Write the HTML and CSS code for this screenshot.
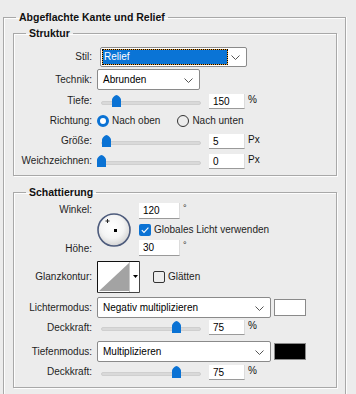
FILE: index.html
```html
<!DOCTYPE html>
<html lang="de">
<head>
<meta charset="utf-8">
<link rel="stylesheet" href="styles.css">
</head>
<body>
<fieldset class="box outer">
  <legend>Abgeflachte Kante und Relief</legend>

  <fieldset class="box inner struktur">
    <legend>Struktur</legend>

    <div class="row h21">
      <span class="lbl">Stil:</span>
      <div class="select sel-stil">
        <span class="hl">Relief</span>
        <svg class="chev" width="9" height="5" viewBox="0 0 9 5"><polyline points="0.5,0.5 4.5,4.5 8.5,0.5" fill="none" stroke="#555" stroke-width="1"/></svg>
      </div>
    </div>

    <div class="row h25">
      <span class="lbl">Technik:</span>
      <div class="select sel-tech">
        <span class="val">Abrunden</span>
        <svg class="chev" width="9" height="5" viewBox="0 0 9 5"><polyline points="0.5,0.5 4.5,4.5 8.5,0.5" fill="none" stroke="#555" stroke-width="1"/></svg>
      </div>
    </div>

    <div class="row h18">
      <span class="lbl">Tiefe:</span>
      <div class="slider"><span class="track"></span>
        <svg class="thumb" style="left:15px" width="9" height="12" viewBox="0 0 9 12"><path d="M4.5 0 C6 0 9 3 9 4.5 V12 H0 V4.5 C0 3 3 0 4.5 0 Z" fill="#0a72d4"/></svg>
      </div>
      <span class="field">150</span><span class="unit">%</span>
    </div>

    <div class="row h21">
      <span class="lbl">Richtung:</span>
      <span class="radio on"></span><span class="rtext">Nach oben</span>
      <span class="radio off"></span><span class="rtext">Nach unten</span>
    </div>

    <div class="row h20">
      <span class="lbl">Größe:</span>
      <div class="slider"><span class="track"></span>
        <svg class="thumb" style="left:5px" width="9" height="12" viewBox="0 0 9 12"><path d="M4.5 0 C6 0 9 3 9 4.5 V12 H0 V4.5 C0 3 3 0 4.5 0 Z" fill="#0a72d4"/></svg>
      </div>
      <span class="field">5</span><span class="unit">Px</span>
    </div>

    <div class="row h20">
      <span class="lbl">Weichzeichnen:</span>
      <div class="slider"><span class="track"></span>
        <svg class="thumb" style="left:0px" width="9" height="12" viewBox="0 0 9 12"><path d="M4.5 0 C6 0 9 3 9 4.5 V12 H0 V4.5 C0 3 3 0 4.5 0 Z" fill="#0a72d4"/></svg>
      </div>
      <span class="field">0</span><span class="unit">Px</span>
    </div>
  </fieldset>

  <fieldset class="box inner schatt">
    <legend>Schattierung</legend>

    <div class="angle-block">
      <div class="lblcol">
        <span class="lbl">Winkel:</span>
        <span class="lbl">Höhe:</span>
      </div>
      <div class="dial">
        <svg width="34" height="34" viewBox="0 0 34 34">
          <defs>
            <radialGradient id="dg" cx="45%" cy="40%" r="60%">
              <stop offset="0" stop-color="#ffffff"/>
              <stop offset="0.6" stop-color="#f4f4f4"/>
              <stop offset="1" stop-color="#d4d4d4"/>
            </radialGradient>
          </defs>
          <circle cx="17" cy="17" r="16" fill="url(#dg)" stroke="#4d5b7c" stroke-width="1.6"/>
          <path d="M10.5 6 V10 M8.5 8 H12.5" stroke="#222" stroke-width="1"/>
          <rect x="17" y="16" width="3" height="3" fill="#000"/>
        </svg>
      </div>
      <div class="anglecol">
        <div class="arow"><span class="field f41">120</span><span class="deg">°</span></div>
        <div class="arow"><span class="check on"><svg width="12" height="12" viewBox="0 0 12 12"><polyline points="2.8,6.2 5,8.4 9.4,3.6" fill="none" stroke="#fff" stroke-width="1.1"/></svg></span><span class="ctext">Globales Licht verwenden</span></div>
        <div class="arow"><span class="field f41">30</span><span class="deg">°</span></div>
      </div>
    </div>

    <div class="row glanz">
      <span class="lbl">Glanzkontur:</span>
      <div class="contour">
        <svg width="43" height="32" viewBox="0 0 43 32">
          <rect x="0" y="0" width="43" height="32" fill="#fff"/>
          <polygon points="2,30 32,2 32,30" fill="#a3a3a3"/>
          <line x1="32.5" y1="1" x2="32.5" y2="31" stroke="#c8c8c8"/>
          <polygon points="36,14 41,14 38.5,17" fill="#000"/>
          <path d="M0.5 31.5 V0.5 H42.5" fill="none" stroke="#111"/>
          <path d="M42.5 0.5 V31.5 H0.5" fill="none" stroke="#444"/>
        </svg>
      </div>
      <span class="check off"></span><span class="ctext">Glätten</span>
    </div>

    <div class="row h21 mt5">
      <span class="lbl">Lichtermodus:</span>
      <div class="select sel-mode">
        <span class="val">Negativ multiplizieren</span>
        <svg class="chev" width="9" height="5" viewBox="0 0 9 5"><polyline points="0.5,0.5 4.5,4.5 8.5,0.5" fill="none" stroke="#555" stroke-width="1"/></svg>
      </div>
      <span class="swatch white"></span>
    </div>

    <div class="row h19">
      <span class="lbl">Deckkraft:</span>
      <div class="slider"><span class="track"></span>
        <svg class="thumb" style="left:75px" width="9" height="12" viewBox="0 0 9 12"><path d="M4.5 0 C6 0 9 3 9 4.5 V12 H0 V4.5 C0 3 3 0 4.5 0 Z" fill="#0a72d4"/></svg>
      </div>
      <span class="field">75</span><span class="unit">%</span>
    </div>

    <div class="row h21 mt4">
      <span class="lbl">Tiefenmodus:</span>
      <div class="select sel-mode">
        <span class="val">Multiplizieren</span>
        <svg class="chev" width="9" height="5" viewBox="0 0 9 5"><polyline points="0.5,0.5 4.5,4.5 8.5,0.5" fill="none" stroke="#555" stroke-width="1"/></svg>
      </div>
      <span class="swatch black"></span>
    </div>

    <div class="row h20">
      <span class="lbl">Deckkraft:</span>
      <div class="slider"><span class="track"></span>
        <svg class="thumb" style="left:75px" width="9" height="12" viewBox="0 0 9 12"><path d="M4.5 0 C6 0 9 3 9 4.5 V12 H0 V4.5 C0 3 3 0 4.5 0 Z" fill="#0a72d4"/></svg>
      </div>
      <span class="field">75</span><span class="unit">%</span>
    </div>
  </fieldset>
</fieldset>
</body>
</html>
```

FILE: styles.css
```css
* { box-sizing: border-box; }
html, body {
  margin: 0;
  padding: 0;
  background: #ececec;
  width: 356px;
  height: 394px;
  overflow: hidden;
}
body {
  font-family: "Liberation Sans", Arial, sans-serif;
  font-size: 10px;
  color: #1e1e1e;
}
.box {
  border: 1px solid #a8a8a8;
  box-shadow: inset 1px 1px 0 #fdfdfd, 1px 1px 0 #fdfdfd;
  padding: 0;
  margin: 0;
  min-width: 0;
}
.box > legend {
  font-weight: bold;
  font-size: 10.5px;
  line-height: 14px;
  height: 14px;
  padding: 0 3px;
  margin-left: 12px;
  color: #111;
}
.outer {
  margin: 10px 0 0 3px;
  width: 343px;
  height: 384px;
  border-bottom: none;
  box-shadow: inset 1px 1px 0 #fdfdfd, 1px 0 0 #fdfdfd;
}
.inner {
  margin-left: 9px;
  width: 324px;
}
.struktur {
  margin-top: 2px;
  padding: 6px 0 4px 0;
}
.schatt {
  margin-top: 9px;
  padding: 4px 0 5px 0;
}
.row {
  display: flex;
  align-items: center;
}
.h18 { height: 18px; }
.h19 { height: 19px; }
.h20 { height: 20px; }
.h21 { height: 21px; }
.h25 { height: 25px; }
.mt4 { margin-top: 4px; }
.mt5 { margin-top: 5px; }
.lbl {
  width: 78px;
  flex: none;
  text-align: right;
  margin-right: 5px;
  line-height: 14px;
  white-space: nowrap;
}
.select {
  position: relative;
  display: flex;
  align-items: center;
  background: #fff;
  border: 1px solid #8a8a8a;
  border-radius: 2px;
  flex: none;
}
.chev {
  position: absolute;
  right: 6px;
  top: 50%;
  margin-top: -2px;
}
.val {
  padding-left: 5px;
  color: #000;
  white-space: nowrap;
}
.sel-stil {
  margin-left: 3px;
  width: 147px;
  height: 20px;
  padding: 1px;
}
.hl {
  display: block;
  width: 126px;
  height: 16px;
  line-height: 14px;
  border: 1px dotted #000;
  background: linear-gradient(#0a74d6, #0a74d6) padding-box, linear-gradient(#e9a23b, #e9a23b) border-box;
  color: #fff;
  padding-left: 1px;
}
.sel-tech {
  width: 103px;
  height: 21px;
}
.sel-mode {
  width: 174px;
  height: 21px;
}
.slider {
  position: relative;
  width: 108px;
  height: 15px;
  flex: none;
}
.track {
  position: absolute;
  left: 4px;
  width: 100px;
  top: 7px;
  height: 4px;
  background: #d9d9d9;
  border: 1px solid #cfcfcf;
  border-radius: 2px;
}
.thumb {
  position: absolute;
  top: 1px;
}
.field {
  flex: none;
  width: 36px;
  height: 15px;
  margin-left: 4px;
  background: #fff;
  border-bottom: 1px solid #9a9a9a;
  border-right: 1px solid #dcdcdc;
  padding-left: 4px;
  line-height: 15px;
  color: #000;
}
.f41 {
  width: 41px;
  height: 16px;
  margin-left: 0;
}
.unit {
  margin-left: 3px;
  margin-top: -4px;
  color: #111;
}
.deg {
  margin-left: 3px;
  margin-top: -6px;
  font-size: 9px;
}
.radio {
  flex: none;
  width: 12px;
  height: 12px;
  border-radius: 50%;
}
.radio.on {
  border: 3.5px solid #0a72d4;
  background: #fff;
}
.radio.off {
  border: 1px solid #333;
  margin-left: 17px;
}
.rtext {
  margin-left: 3px;
  line-height: 14px;
}
.angle-block {
  display: flex;
  height: 53px;
}
.lblcol {
  display: flex;
  flex-direction: column;
  justify-content: space-between;
  margin-right: 5px;
}
.lblcol .lbl { margin-right: 0; }
.dial {
  align-self: center;
  width: 34px;
  height: 34px;
  margin-top: 1px;
}
.dial svg { display: block; }
.anglecol {
  margin-left: 8px;
  display: flex;
  flex-direction: column;
  justify-content: space-between;
}
.arow {
  display: flex;
  align-items: center;
}
.check {
  flex: none;
  width: 12px;
  height: 12px;
  border-radius: 2px;
}
.check svg { display: block; }
.check.on {
  background: #0a72d4;
}
.check.off {
  border: 1px solid #333;
  margin-left: 13px;
}
.ctext {
  margin-left: 3px;
  line-height: 14px;
  white-space: nowrap;
}
.glanz {
  margin-top: 5px;
  height: 31px;
}
.contour {
  flex: none;
  width: 43px;
  height: 32px;
}
.contour svg { display: block; }
.swatch {
  flex: none;
  width: 32px;
  height: 17px;
  margin-left: 3px;
  border: 1px solid #8a8a8a;
}
.swatch.white { background: #fff; }
.swatch.black { background: #000; }
```
